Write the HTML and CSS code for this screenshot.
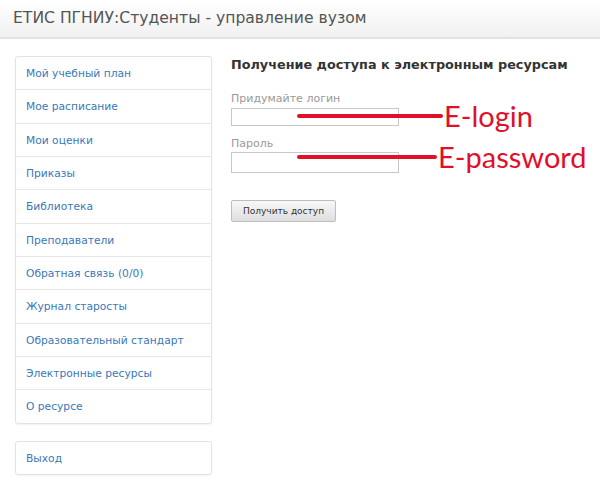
FILE: index.html
```html
<!DOCTYPE html>
<html lang="ru">
<head>
  <meta charset="UTF-8">
  <title>ЕТИС ПГНИУ</title>
  <link rel="stylesheet" href="styles.css">
</head>
<body>

  <div class="header">ЕТИС ПГНИУ:Студенты - управление вузом</div>

  <div class="page">
    <div class="sidebar">
      <ul class="menu">
        <li><a href="#">Мой учебный план</a></li>
        <li><a href="#">Мое расписание</a></li>
        <li><a href="#">Мои оценки</a></li>
        <li><a href="#">Приказы</a></li>
        <li><a href="#">Библиотека</a></li>
        <li><a href="#">Преподаватели</a></li>
        <li><a href="#">Обратная связь (0/0)</a></li>
        <li><a href="#">Журнал старосты</a></li>
        <li><a href="#">Образовательный стандарт</a></li>
        <li><a href="#">Электронные ресурсы</a></li>
        <li><a href="#">О ресурсе</a></li>
      </ul>
      <ul class="menu">
        <li><a href="#">Выход</a></li>
      </ul>
    </div>

    <div class="content">
      <h2>Получение доступа к электронным ресурсам</h2>
      <form class="access-form">
        <label for="login">Придумайте логин</label>
        <input type="text" id="login">
        <label for="pass">Пароль</label>
        <input type="password" id="pass" class="pass">
        <button type="button">Получить доступ</button>
      </form>

      <div class="note note-login"><span class="line"></span><span class="tag">E-login</span></div>
      <div class="note note-pass"><span class="line"></span><span class="tag">E-password</span></div>
    </div>
  </div>

</body>
</html>
```

FILE: styles.css
```css
body {
  margin: 0;
  font-family: "DejaVu Sans", Verdana, sans-serif;
  background: #fff;
  color: #333;
}
.header {
  height: 37px;
  line-height: 36px;
  padding-left: 13px;
  font-size: 15.6px;
  color: #555;
  background: linear-gradient(#fff, #f1f1f1);
  border-bottom: 2px solid #e2e2e2;
}
.page {
  display: flex;
  padding: 17px 0 0 15px;
}
.sidebar {
  width: 197px;
}
.menu {
  list-style: none;
  margin: 0 0 17px 0;
  padding: 0;
  border: 1px solid #e3e3e3;
  border-radius: 3px;
  box-shadow: 0 1px 2px rgba(0,0,0,0.06);
}
.menu li {
  height: 32.35px;
  line-height: 33px;
  border-bottom: 1px solid #e6e6e6;
}
.menu li:last-child {
  border-bottom: none;
}
.menu a {
  display: block;
  padding-left: 10px;
  font-size: 10.7px;
  color: #3a78b8;
  text-decoration: none;
}
.content {
  position: relative;
  flex: 1;
  padding-left: 19px;
}
.content h2 {
  margin: 1px 0 0 0;
  font-size: 12.8px;
  font-weight: bold;
  color: #333;
}
.access-form {
  display: flex;
  flex-direction: column;
  align-items: flex-start;
  margin-top: 20px;
}
.access-form label {
  font-size: 11px;
  color: #999;
}
.access-form input {
  width: 162px;
  height: 14px;
  margin: 3px 0 11px 0;
  padding: 1px 2px;
  border: 1px solid #c8c8c8;
  font-size: 11px;
}
.access-form input.pass {
  height: 17px;
  margin-top: 2px;
}
.access-form button {
  margin-top: 16px;
  width: 105px;
  height: 22px;
  font-family: "DejaVu Sans", Verdana, sans-serif;
  font-size: 9px;
  color: #333;
  background: linear-gradient(#f8f8f8, #dedede);
  border: 1px solid #bdbdbd;
  border-radius: 2px;
}
.note {
  position: absolute;
  display: flex;
  align-items: center;
  left: 85px;
}
.note-login {
  top: 45px;
}
.note-pass {
  top: 86px;
}
.line {
  height: 4px;
  background: #e0102a;
  border-radius: 2px;
}
.note-login .line {
  width: 146px;
}
.note-pass .line {
  width: 140px;
}
.tag {
  font-family: Lato, "Open Sans", sans-serif;
  font-size: 29px;
  color: #e0102a;
  margin-left: 1px;
  line-height: 30px;
}
```
